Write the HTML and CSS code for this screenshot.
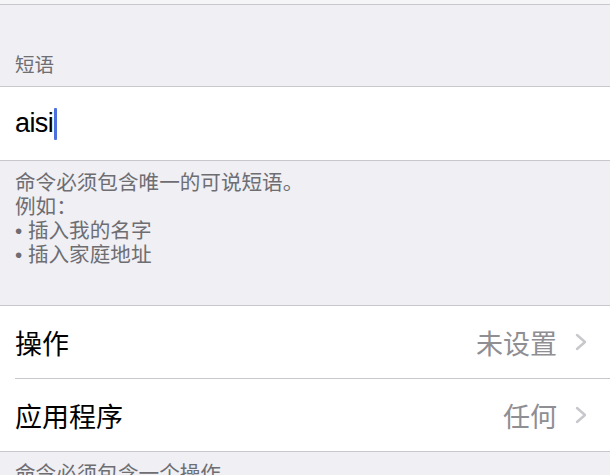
FILE: index.html
```html
<!DOCTYPE html>
<html lang="zh-CN">
<head>
<meta charset="utf-8">
<title>短语</title>
<link rel="stylesheet" href="styles.css">
</head>
<body>
<div class="screen">
  <div class="top"></div>
  <div class="section-header">短语</div>
  <div class="group">
    <div class="field">
      <span class="field-text">aisi</span><span class="cursor"></span>
    </div>
  </div>
  <div class="section-footer">
    <div>命令必须包含唯一的可说短语。</div>
    <div>例如：</div>
    <div>• 插入我的名字</div>
    <div>• 插入家庭地址</div>
  </div>
  <div class="group">
    <div class="row">
      <span class="row-label">操作</span>
      <span class="row-value">未设置</span>
      <svg class="chevron" width="12" height="18" viewBox="0 0 12 18"><path d="M2 2 L10 9 L2 16" fill="none" stroke="#c7c7cc" stroke-width="2.4" stroke-linecap="round" stroke-linejoin="round"/></svg>
    </div>
    <div class="row">
      <span class="row-label">应用程序</span>
      <span class="row-value">任何</span>
      <svg class="chevron" width="12" height="18" viewBox="0 0 12 18"><path d="M2 2 L10 9 L2 16" fill="none" stroke="#c7c7cc" stroke-width="2.4" stroke-linecap="round" stroke-linejoin="round"/></svg>
    </div>
  </div>
  <div class="section-footer last">
    <div>命令必须包含一个操作。</div>
  </div>
</div>
</body>
</html>
```
FILE: styles.css
```css
html, body {
  margin: 0;
  padding: 0;
}
body {
  background: #efeff4;
  font-family: "Liberation Sans", "Noto Sans CJK SC", sans-serif;
  width: 610px;
  height: 475px;
  overflow: hidden;
}
.screen {
  display: flex;
  flex-direction: column;
}
.top {
  height: 4px;
  background: #f5f5f8;
  border-bottom: 1px solid #c8c7cc;
}
.section-header {
  padding: 48px 15px 9px;
  height: 24px;
  font-size: 19.5px;
  line-height: 24px;
  color: #6d6d72;
}
.group {
  background: #ffffff;
  border-top: 1px solid #c8c7cc;
  border-bottom: 1px solid #c8c7cc;
}
.field {
  height: 73px;
  display: flex;
  align-items: center;
  padding-left: 15px;
}
.field-text {
  font-size: 27px;
  color: #000;
  letter-spacing: -0.6px;
}
.cursor {
  width: 3px;
  height: 32px;
  background: #4f6fdc;
  border-radius: 1px;
  margin-left: 1px;
}
.section-footer {
  padding: 10px 15px 38px;
  font-size: 20.6px;
  line-height: 24px;
  color: #6d6d72;
}
.section-footer.last {
  padding-top: 10px;
}
.row {
  height: 72px;
  display: flex;
  align-items: center;
  padding: 0 23px 0 15px;
  position: relative;
}
.row + .row::before {
  content: "";
  position: absolute;
  left: 15px;
  right: 0;
  top: -1px;
  border-top: 1px solid #c8c7cc;
}
.row + .row {
  margin-top: 1px;
}
.row-label {
  flex: 1;
  font-size: 27px;
  color: #000;
}
.row-value {
  font-size: 27px;
  color: #8e8e93;
  margin-right: 18px;
}
.chevron {
  display: block;
}
```
